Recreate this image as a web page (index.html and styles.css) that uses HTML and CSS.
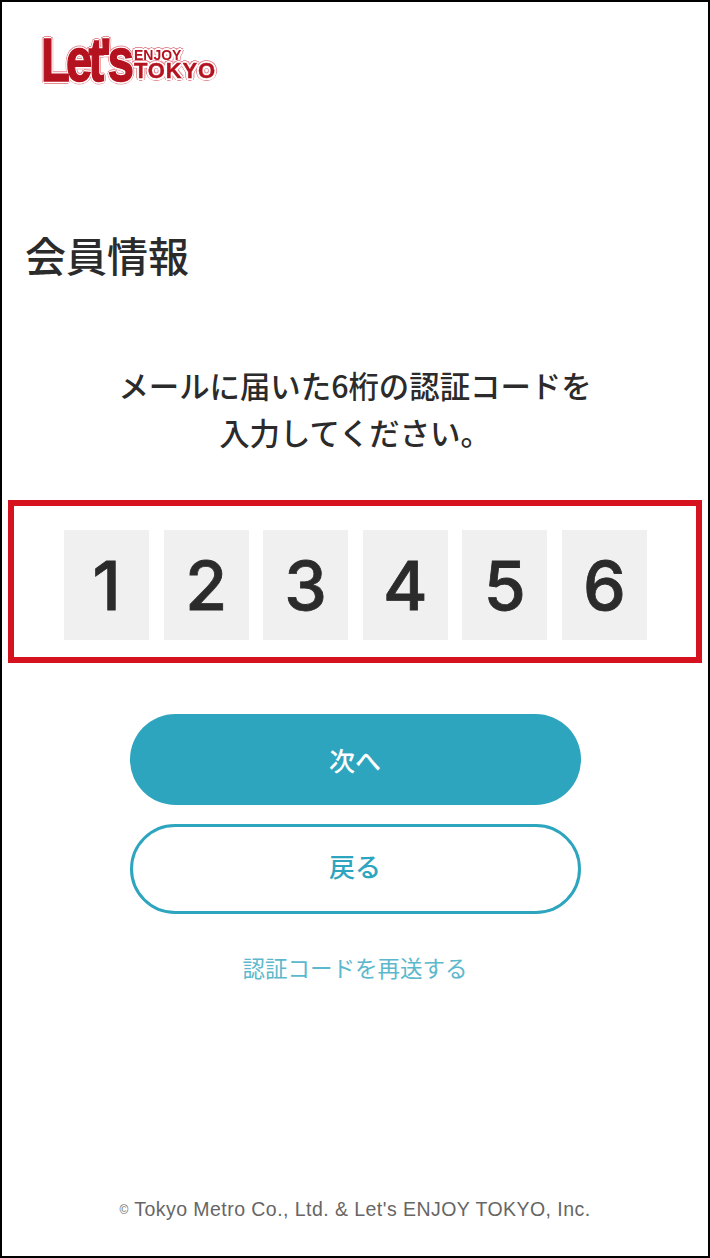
FILE: index.html
```html
<!DOCTYPE html>
<html lang="ja">
<head>
<meta charset="UTF-8">
<meta name="viewport" content="width=device-width, initial-scale=1.0">
<title>会員情報</title>
<link rel="stylesheet" href="styles.css">
</head>
<body>
<div class="frame">
  <header class="logo">
    <span class="logo-lets">Let's</span>
    <span class="logo-right">
      <span class="logo-enjoy">ENJOY</span>
      <span class="logo-tokyo">TOKYO</span>
    </span>
  </header>

  <h1 class="page-title">会員情報</h1>

  <p class="lead">メールに届いた6桁の認証コードを<br>入力してください。</p>

  <div class="code-box">
    <div class="digit">1</div>
    <div class="digit">2</div>
    <div class="digit">3</div>
    <div class="digit">4</div>
    <div class="digit">5</div>
    <div class="digit">6</div>
  </div>

  <div class="actions">
    <button class="btn btn-primary">次へ</button>
    <button class="btn btn-outline">戻る</button>
    <a class="resend" href="#">認証コードを再送する</a>
  </div>

  <footer class="copyright"><span class="copy-mark">©</span> Tokyo Metro Co., Ltd. &amp; Let's ENJOY TOKYO, Inc.</footer>
</div>
</body>
</html>
```

FILE: styles.css
```css
* { box-sizing: border-box; }
html, body { margin: 0; padding: 0; }
body {
  font-family: "Noto Sans CJK JP", "Liberation Sans", sans-serif;
  color: #2b2b2b;
  background: #fff;
}
.frame {
  width: 710px;
  height: 1258px;
  border: 2px solid #000;
  display: flex;
  flex-direction: column;
  overflow: hidden;
}

/* logo */
.logo {
  display: flex;
  align-items: flex-end;
  height: 57px;
  margin: 28px 0 0 39px;
  color: #b5121f;
  font-family: "Liberation Sans", sans-serif;
  font-weight: bold;
  filter: blur(.5px);
  text-shadow:
    2px 0 0 #fff, -2px 0 0 #fff, 0 2px 0 #fff, 0 -2px 0 #fff,
    1.5px 1.5px 0 #fff, -1.5px 1.5px 0 #fff, 1.5px -1.5px 0 #fff, -1.5px -1.5px 0 #fff,
    3px 0 0 #e58c94, -3px 0 0 #e58c94, 0 3px 0 #e58c94, 0 -3px 0 #e58c94,
    2.2px 2.2px 0 #e58c94, -2.2px 2.2px 0 #e58c94, 2.2px -2.2px 0 #e58c94, -2.2px -2.2px 0 #e58c94;
}
.logo-lets {
  width: 93px;
  font-size: 62px;
  line-height: 54px;
  letter-spacing: -5px;
  white-space: nowrap;
  -webkit-text-stroke: 1.5px #b5121f;
  transform: scaleX(.76);
  transform-origin: left bottom;
}
.logo-right {
  display: flex;
  flex-direction: column;
  margin-bottom: 6px;
}
.logo-enjoy {
  font-size: 14px;
  line-height: 11px;
}
.logo-tokyo {
  font-size: 22px;
  line-height: 20px;
  letter-spacing: .8px;
  -webkit-text-stroke: .4px #b5121f;
}

.page-title {
  margin: 140px 0 0 23px;
  font-size: 41px;
  line-height: 54px;
  font-weight: 500;
}
.lead {
  margin: 81px 0 0;
  text-align: center;
  font-size: 30.4px;
  line-height: 47px;
  font-weight: 500;
}

/* code input */
.code-box {
  margin: 44px 0 0 6px;
  width: 694px;
  height: 163px;
  border: 6px solid #d7121f;
  padding: 24px 49px 0 50px;
  display: flex;
  justify-content: space-between;
}
.digit {
  width: 85px;
  height: 110px;
  background: #f0f0f0;
  text-align: center;
  font-family: Inter, "Liberation Sans", sans-serif;
  font-size: 68px;
  line-height: 110px;
  font-weight: 500;
  -webkit-text-stroke: .8px #2b2b2b;
}

.actions {
  display: flex;
  flex-direction: column;
  align-items: center;
  margin-top: 51px;
}
.btn {
  width: 451px;
  height: 91px;
  border-radius: 46px;
  font-family: inherit;
  font-size: 26px;
  font-weight: 500;
  cursor: pointer;
}
.btn-primary {
  background: #2ea5bf;
  border: none;
  color: #fff;
}
.btn-outline {
  margin-top: 19px;
  height: 90px;
  padding-bottom: 9px;
  background: #fff;
  border: 3px solid #2ea5bf;
  color: #2ea5bf;
}
.resend {
  margin-top: 37px;
  color: #5cb8cc;
  font-size: 22.5px;
  line-height: 32px;
  text-decoration: none;
}

.copyright {
  margin-top: auto;
  margin-bottom: 34px;
  text-align: center;
  font-family: "Liberation Sans", sans-serif;
  font-size: 19.5px;
  line-height: 24px;
  letter-spacing: .45px;
  color: #666;
}
.copy-mark { font-size: 12px; vertical-align: 2px; }
```
